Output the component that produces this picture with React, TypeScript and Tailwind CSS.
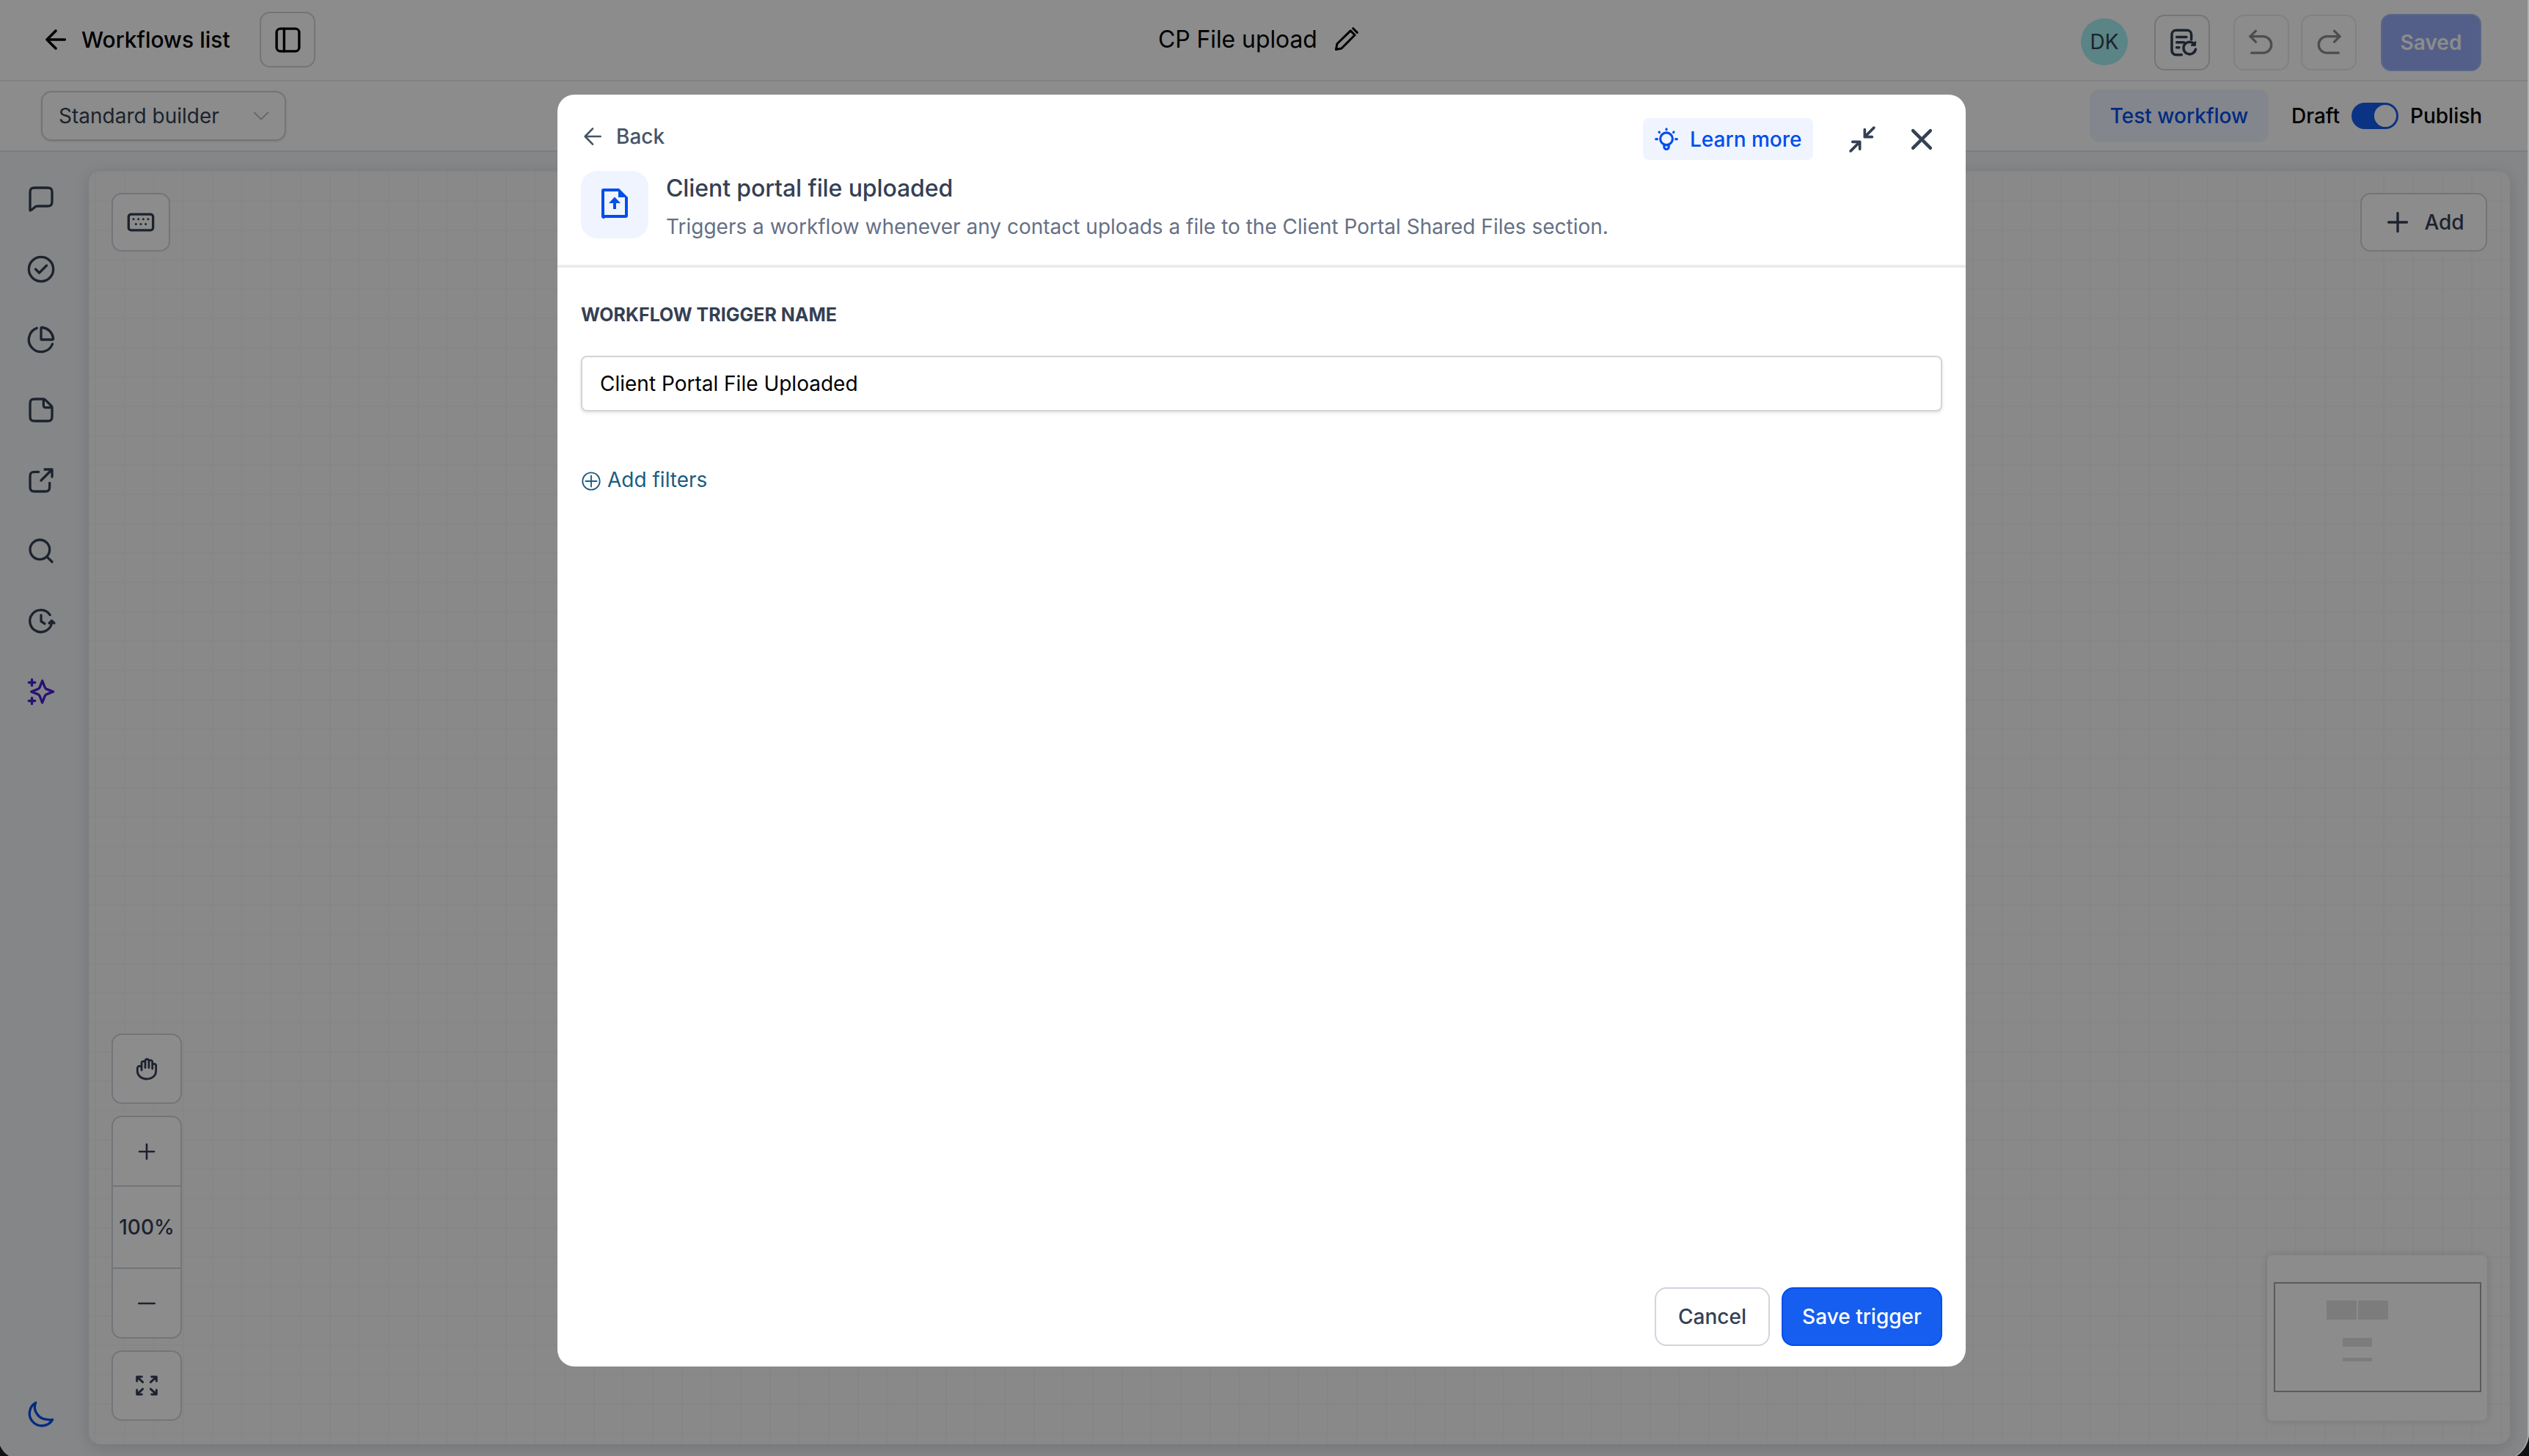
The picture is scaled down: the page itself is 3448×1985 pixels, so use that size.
import type { ReactNode, SVGProps } from "react";

const Icon = ({ children, ...props }: SVGProps<SVGSVGElement>) => (
  <svg
    viewBox="0 0 24 24"
    fill="none"
    stroke="currentColor"
    strokeWidth={2}
    strokeLinecap="round"
    strokeLinejoin="round"
    {...props}
  >
    {children}
  </svg>
);

const sidebarIcons: { key: string; className: string; icon: ReactNode }[] = [
  {
    key: "messages",
    className: "text-[#344054]",
    icon: (
      <path d="M3 7.8c0-1.68 0-2.52.33-3.16a3 3 0 0 1 1.31-1.31C5.28 3 6.12 3 7.8 3h8.4c1.68 0 2.52 0 3.16.33a3 3 0 0 1 1.31 1.31c.33.64.33 1.48.33 3.16v5.4c0 1.68 0 2.52-.33 3.16a3 3 0 0 1-1.31 1.31c-.64.33-1.48.33-3.16.33H9.68c-.62 0-.93 0-1.23.06a3 3 0 0 0-.76.27c-.27.14-.52.33-1 .72l-2.39 1.91c-.42.33-.62.5-.8.5a.5.5 0 0 1-.39-.19C3 21.8 3 21.54 3 21Z" />
    ),
  },
  {
    key: "check",
    className: "text-[#344054]",
    icon: (
      <>
        <circle cx="12" cy="12" r="10" />
        <path d="m7.5 12 3 3 6-6" />
      </>
    ),
  },
  {
    key: "chart",
    className: "text-[#344054]",
    icon: (
      <>
        <path d="M12 3.2c0-.48 0-.72.1-.88a.6.6 0 0 1 .36-.27c.18-.05.4-.02.82.04A10 10 0 0 1 21.9 10.7c.06.43.1.65.04.83a.6.6 0 0 1-.27.36c-.16.1-.4.1-.88.1H12.8c-.28 0-.42 0-.53-.05a.5.5 0 0 1-.22-.22c-.05-.1-.05-.24-.05-.52Z" />
        <path d="M8.5 2.6A10 10 0 1 0 21.3 15.6" />
      </>
    ),
  },
  {
    key: "note",
    className: "text-[#344054]",
    icon: (
      <>
        <path d="M14 3.5v3.9c0 .9 0 1.35.17 1.7.16.3.4.55.7.7.35.2.8.2 1.73.2h3.9" />
        <path d="M21 11.2v5c0 1.7 0 2.5-.33 3.16a3 3 0 0 1-1.31 1.31c-.64.33-1.48.33-3.16.33H7.8c-1.68 0-2.52 0-3.16-.33a3 3 0 0 1-1.31-1.31C3 18.72 3 17.88 3 16.2V7.8c0-1.68 0-2.52.33-3.16a3 3 0 0 1 1.31-1.31C5.28 3 6.12 3 7.8 3h5c.75 0 1.1 0 1.46.08.3.08.6.2.88.36.3.2.56.46 1.08.98l3.36 3.36c.52.52.78.78.97 1.08.17.28.3.57.37.88.08.35.08.72.08 1.46Z" />
      </>
    ),
  },
  {
    key: "share",
    className: "text-[#344054]",
    icon: (
      <>
        <path d="M21 9V3h-6M21 3l-9 9" />
        <path d="M10 5H7.8c-1.68 0-2.52 0-3.16.33a3 3 0 0 0-1.31 1.31C3 7.28 3 8.12 3 9.8v6.4c0 1.68 0 2.52.33 3.16a3 3 0 0 0 1.31 1.31c.64.33 1.48.33 3.16.33h6.4c1.68 0 2.52 0 3.16-.33a3 3 0 0 0 1.31-1.31c.33-.64.33-1.48.33-3.16V14" />
      </>
    ),
  },
  {
    key: "search",
    className: "text-[#344054]",
    icon: (
      <>
        <circle cx="11" cy="11" r="8" />
        <path d="m21 21-4.3-4.3" />
      </>
    ),
  },
  {
    key: "history",
    className: "text-[#344054]",
    icon: (
      <>
        <path d="m22.7 13.5-2-2-2 2" />
        <path d="M20.8 12.500A9 9 0 1 1 19.300 6.800" />
        <path d="M12 7v5l3 2" />
      </>
    ),
  },
  {
    key: "ai",
    className: "text-[#4a1fd0]",
    icon: (
      <>
        <path d="M4.5 22v-5M4.5 7V2M2 4.5h5M2 19.5h5" />
        <path d="m13 3-1.73 4.5c-.29.74-.43 1.1-.65 1.42-.2.27-.43.5-.7.7-.31.22-.68.36-1.42.65L4 12l4.5 1.73c.74.29 1.1.43 1.42.65.27.2.5.43.7.7.22.31.36.68.65 1.42L13 21l1.73-4.5c.29-.74.43-1.1.65-1.42.2-.27.43-.5.7-.7.31-.22.68-.36 1.42-.65L22 12l-4.5-1.73c-.74-.29-1.1-.43-1.42-.65a3 3 0 0 1-.7-.7c-.22-.31-.36-.68-.65-1.42Z" />
      </>
    ),
  },
];

const TopBar = () => (
  <header className="flex h-[111px] shrink-0 items-start border-b-2 border-[#eaecf0] bg-white">
    <div className="flex w-[1579px] items-center pl-[56px] pt-4">
      <Icon className="size-10 text-black" strokeWidth={2.2}>
        <path d="M19.4 12H5M12 19.2 4.8 12 12 4.8" />
      </Icon>
      <span className="ml-[15px] w-[243px] text-[30px] font-medium leading-[76px]">
        Workflows list
      </span>
      <button className="flex size-[76px] items-center justify-center rounded-[14px] border-2 border-[#d0d5dd]">
        <Icon className="size-[41px]">
          <rect x="3" y="3" width="18" height="18" rx="3" />
          <path d="M9 3v18" />
        </Icon>
      </button>
    </div>
    <div className="flex items-center pt-4">
      <span className="w-[238px] text-[32px] leading-[76px] tracking-[-0.1px]">
        CP File upload
      </span>
      <Icon className="size-9" strokeWidth={2}>
        <path d="m3 21 1-5.200L16.200 3.900l3.900 3.900L8 20Z" />
        <path d="m18.500 1.800 3.800 3.800" />
      </Icon>
    </div>
    <div className="ml-auto flex items-start pr-[65px] pt-[19px]">
      <div className="mr-9 mt-1.5 flex size-16 items-center justify-center rounded-full bg-[#a5f0f2] text-[28px] text-[#344054]">
        DK
      </div>
      <button className="mr-8 mt-px flex size-[76px] items-center justify-center rounded-[14px] border-2 border-[#d0d5dd] text-[#344054]">
        <Icon className="ml-0.5 size-10" strokeWidth={2.1}>
          <path d="M11 22H6.500A3.500 3.500 0 0 1 3 18.500v-13A3.500 3.500 0 0 1 6.500 2h9A3.500 3.500 0 0 1 19 5.500V9.500" />
          <path d="M7 7.500h8M7 11.800h6M7 16h2" />
          <path d="M21.600 13.500A5 5 0 1 0 22.500 17.500" />
          <path d="m19 14.300 3.200.2.300-3.200Z" fill="currentColor" strokeWidth={1} />
        </Icon>
      </button>
      <button className="mr-4 mt-px flex size-[76px] items-center justify-center rounded-[14px] border-2 border-[#eaecf0] text-[#8c8c90]">
        <Icon className="size-10">
          <path d="M7.500 2.500 3 7l4.500 4.500" />
          <path d="M3 7h10.500a6.700 6.700 0 0 1 0 13.500H4" />
        </Icon>
      </button>
      <button className="mr-[33px] mt-px flex size-[76px] items-center justify-center rounded-[14px] border-2 border-[#eaecf0] text-[#8c8c90]">
        <Icon className="size-10">
          <path d="M16.500 2.500 21 7l-4.500 4.500" />
          <path d="M21 7H10.500a6.700 6.700 0 0 0 0 13.500H20" />
        </Icon>
      </button>
      <button className="flex h-[78px] w-[137px] items-center justify-center rounded-[14px] border-2 border-[#a3bcfa] bg-[#98adf8] text-[28px] font-semibold text-white">
        Saved
      </button>
    </div>
  </header>
);

const SubBar = () => (
  <div className="flex h-24 shrink-0 items-start border-b-2 border-[#e2e4e8] bg-white pl-14 pr-[65px] pt-[11px] text-[28px]">
    <button className="mt-0.5 flex h-[68px] w-[334px] items-center rounded-[14px] border-2 border-[#d0d5dd] pl-[22px] shadow-sm">
      <span className="w-[262px] text-left leading-[60px] text-[#344054]">
        Standard builder
      </span>
      <Icon className="size-7 text-[#b8b9be]" strokeWidth={1.6}>
        <path d="m4 8 8 8 8-8" />
      </Icon>
    </button>
    <div className="ml-auto flex items-center">
      <button className="h-[72px] w-[244px] rounded-[14px] bg-[#eff4ff] font-medium text-[#004eeb]">
        Test workflow
      </button>
      <span className="ml-[31px] w-[82px] font-medium">Draft</span>
      <div className="flex h-9 w-16 items-center justify-end rounded-full bg-[#155eef] pr-0.5">
        <div className="size-8 scale-[0.94] rounded-full bg-white shadow" />
      </div>
      <span className="ml-4 w-[97px] font-medium">Publish</span>
    </div>
  </div>
);

const Sidebar = () => (
  <aside className="flex w-[121px] shrink-0 flex-col pb-9 pl-9 pt-[44px]">
    <div className="flex flex-col gap-14">
      {sidebarIcons.map(({ key, className, icon }) => (
        <Icon key={key} className={`size-10 ${className}`}>
          {icon}
        </Icon>
      ))}
    </div>
    <Icon className="mt-auto size-10 -ml-px text-[#004eeb]">
      <path d="M22 15.800A10.100 10.100 0 1 1 8.200 2a9 9 0 0 0 .2 7.800c1.900 3.900 5.500 6 9.600 6a10 10 0 0 0 4 0Z" />
    </Icon>
  </aside>
);

const boxButton =
  "flex items-center justify-center rounded-[14px] border-2 border-[#d0d5dd] bg-white text-[#344054]";

const MiniMap = () => (
  <div className="flex h-[226px] w-[300px] items-center justify-center rounded-lg bg-white shadow-[0_0_12px_rgba(0,0,0,0.15)]">
    <div className="mb-0.5 h-[150px] w-[283px] border-2 border-[#a3a6ab] pl-[70px] pt-[23px]">
      <div className="flex gap-0.5">
        <div className="h-[26px] w-[41px] bg-[#e2e2e2]" />
        <div className="h-[26px] w-[41px] bg-[#e2e2e2]" />
      </div>
      <div className="ml-[22px] mt-[25px] h-3 w-10 bg-[#e2e2e2]" />
      <div className="ml-[22px] mt-[15px] h-[5px] w-10 bg-[#e2e2e2]" />
    </div>
  </div>
);

const Canvas = () => (
  <section className="mr-[26px] mt-[26px] flex h-[1736px] flex-1 flex-col justify-between rounded-[16px] bg-[#fafafa] bg-[linear-gradient(to_right,#f5f5f6_2px,transparent_2px),linear-gradient(to_bottom,#f5f5f6_2px,transparent_2px)] bg-[length:40px_40px] bg-[position:8px_0px] pb-8 pl-[31px] pr-[31px] pt-[30px] shadow-[0_4px_20px_rgba(16,24,40,0.14)]">
    <div className="flex justify-between">
      <button className={`${boxButton} size-20`}>
        <Icon className="size-10" strokeWidth={2}>
          <rect x="2" y="5.500" width="20" height="13" rx="2" />
          <path
            d="M6 9.500h.01M10 9.500h.01M14 9.500h.01M18 9.500h.01M8 13.500h.01M12 13.500h.01M16 13.500h.01"
            strokeWidth={1.8}
          />
        </Icon>
      </button>
      <button className={`${boxButton} h-20 w-[173px] text-[28px] font-medium`}>
        <Icon className="mr-4 size-10" strokeWidth={2}>
          <path d="M4.500 12h15M12 4.500v15" />
        </Icon>
        Add
      </button>
    </div>
    <div className="flex items-end justify-between">
      <div className="flex w-[96px] flex-col gap-4">
        <button className={`${boxButton} h-[96px]`}>
          <Icon className="size-8" strokeWidth={2.1}>
            <path d="M6.800 13.500V5.800a1.900 1.900 0 0 1 3.700 0V11M10.500 11V3.700a1.900 1.900 0 0 1 3.700 0V11M14.200 11V4.600a1.900 1.900 0 0 1 3.600 0V12M17.800 8.500a1.900 1.900 0 0 1 3.700 0v5.700c0 4.700-3.600 8.300-9.500 8.300-5.600 0-9.500-3.500-9.500-8v-3a2.150 2.150 0 0 1 4.300 0" />
          </Icon>
        </button>
        <div className={`${boxButton} h-[304px] flex-col`}>
          <button className="flex h-[93px] items-center">
            <Icon className="size-8" strokeWidth={2}>
              <path d="M4.500 12h15M12 4.500v15" />
            </Icon>
          </button>
          <span className="flex h-[114px] w-full items-center justify-center border-y-2 border-[#d0d5dd] text-[28px] font-medium">
            100%
          </span>
          <button className="flex h-[93px] items-center">
            <Icon className="size-8" strokeWidth={2}>
              <path d="M4 12h16" />
            </Icon>
          </button>
        </div>
        <button className={`${boxButton} h-[96px]`}>
          <Icon className="size-8" strokeWidth={2.2}>
            <path d="M2 7.500V3h5M2.500 3.500 8 8.500M22 7.500V3h-5M21.500 3.500 16 8.500M2 16.500V21h5M2.500 20.500 8 15.500M22 16.500V21h-5M21.500 20.500 16 15.500" />
          </Icon>
        </button>
      </div>
      <MiniMap />
    </div>
  </section>
);

const TriggerModal = () => (
  <div className="ml-[760px] mt-[129px] flex h-[1734px] w-[1920px] flex-col rounded-[23px] bg-white">
    <div className="flex h-[236px] shrink-0 justify-between border-b-4 border-[#ececee] pl-8">
      <div>
        <div className="mt-[37px] flex h-10 items-center text-[28px] font-medium text-[#475467]">
          <Icon className="mr-4 size-8" strokeWidth={2}>
            <path d="M20 12H4.500M12 20l-7.700-8L12 4" />
          </Icon>
          Back
        </div>
        <div className="mt-[27px] flex">
          <div className="flex size-[92px] items-start justify-center rounded-[22px] bg-[#eff4ff] pt-5 text-[#004eeb]">
            <svg viewBox="0 0 24 24" className="size-12" fill="currentColor">
              <path
                fillRule="evenodd"
                d="M4 2h11l6 6v12.500a1.500 1.500 0 0 1-1.500 1.500h-14A1.500 1.500 0 0 1 3 20.500V3.500A1.500 1.500 0 0 1 4.500 2ZM5 4v16h14V8h-4.500V4Zm7 3.800 4 4.200h-3v4h-2v-4H8Z"
              />
            </svg>
          </div>
          <div className="ml-[24px]">
            <h2 className="text-[32px] font-medium leading-[48px] tracking-[-0.1px] text-[#344054]">
              Client portal file uploaded
            </h2>
            <p className="mt-2 text-[28px] leading-10 text-[#667085]">
              Triggers a workflow whenever any contact uploads a file to the
              Client Portal Shared Files section.
            </p>
          </div>
        </div>
      </div>
      <div className="mt-8 flex h-[57px] items-center pr-[38px]">
        <button className="flex h-[57px] w-[232px] items-center rounded-lg bg-[#eff4ff] pl-[13px] text-[28px] font-medium text-[#004eeb]">
          <Icon className="mr-[13px] size-[38px]" strokeWidth={2}>
            <circle cx="12" cy="11.500" r="5.300" />
            <path d="M12 3v.6M5.700 5.700l.3.300M18.300 5.700l-.3.300M3 11.800h1M20 11.800h1M10 16.500v2a2 2 0 0 0 4 0v-2M10 16.800h4" />
          </Icon>
          Learn more
        </button>
        <Icon className="ml-[47px] size-10 text-[#344054]" strokeWidth={2.2}>
          <path d="M4 14h6v6M20 10h-6V4M14 10l7.500-7.500M2.500 21.500 10 14" />
        </Icon>
        <Icon className="ml-[39px] size-11 text-[#344054]" strokeWidth={2.4}>
          <path d="M18.500 5.500l-13 13M5.500 5.500l13 13" />
        </Icon>
      </div>
    </div>
    <div className="flex flex-1 flex-col px-8">
      <label className="mt-11 text-[25px] font-bold leading-10 text-[#344054]">
        WORKFLOW TRIGGER NAME
      </label>
      <input
        className="mt-9 h-[76px] rounded-lg border-2 border-[#d2d4da] px-6 text-[28px] text-black shadow-[0_2px_4px_rgba(16,24,40,0.12)]"
        defaultValue="Client Portal File Uploaded"
      />
      <button className="mt-[73px] flex h-10 items-center text-[28px] text-[#1b5c83]">
        <Icon className="mr-2 mt-1 size-7" strokeWidth={1.6}>
          <circle cx="12" cy="12" r="10" />
          <path d="M5.500 12h13M12 5.500v13" />
        </Icon>
        Add filters
      </button>
    </div>
    <div className="flex justify-end gap-4 pb-7 pr-8 text-[28px] font-medium">
      <button className="h-20 w-[157px] rounded-[16px] border-2 border-[#d0d5dd] text-[#344054]">
        Cancel
      </button>
      <button className="h-20 w-[219px] rounded-[16px] border-2 border-[#004eeb] bg-[#155eef] text-white">
        Save trigger
      </button>
    </div>
  </div>
);

const App = () => {
  return (
    <main className="relative flex h-[1985px] w-[3448px] flex-col overflow-hidden bg-[#f2f4f7] font-['Inter',sans-serif] text-black">
      <TopBar />
      <SubBar />
      <div className="flex flex-1">
        <Sidebar />
        <Canvas />
      </div>
      <div className="absolute inset-0 border-r-2 border-[#b0b0b0] bg-black/45">
        <TriggerModal />
      </div>
      {/* rounded window corners */}
      <svg className="absolute bottom-0 left-0 h-4 w-4" viewBox="0 0 16 16">
        <path d="M0 2Q4 11 12 16H0Z" fill="#111" />
      </svg>
      <svg className="absolute bottom-0 right-0 h-7 w-5" viewBox="0 0 20 28">
        <path d="M20 0Q18 18 3 28H20Z" fill="#111" />
        <path d="M19 0Q17 18 2 28" fill="none" stroke="#a8a8a8" strokeWidth="1.500" />
      </svg>
    </main>
  );
};

export default App;
